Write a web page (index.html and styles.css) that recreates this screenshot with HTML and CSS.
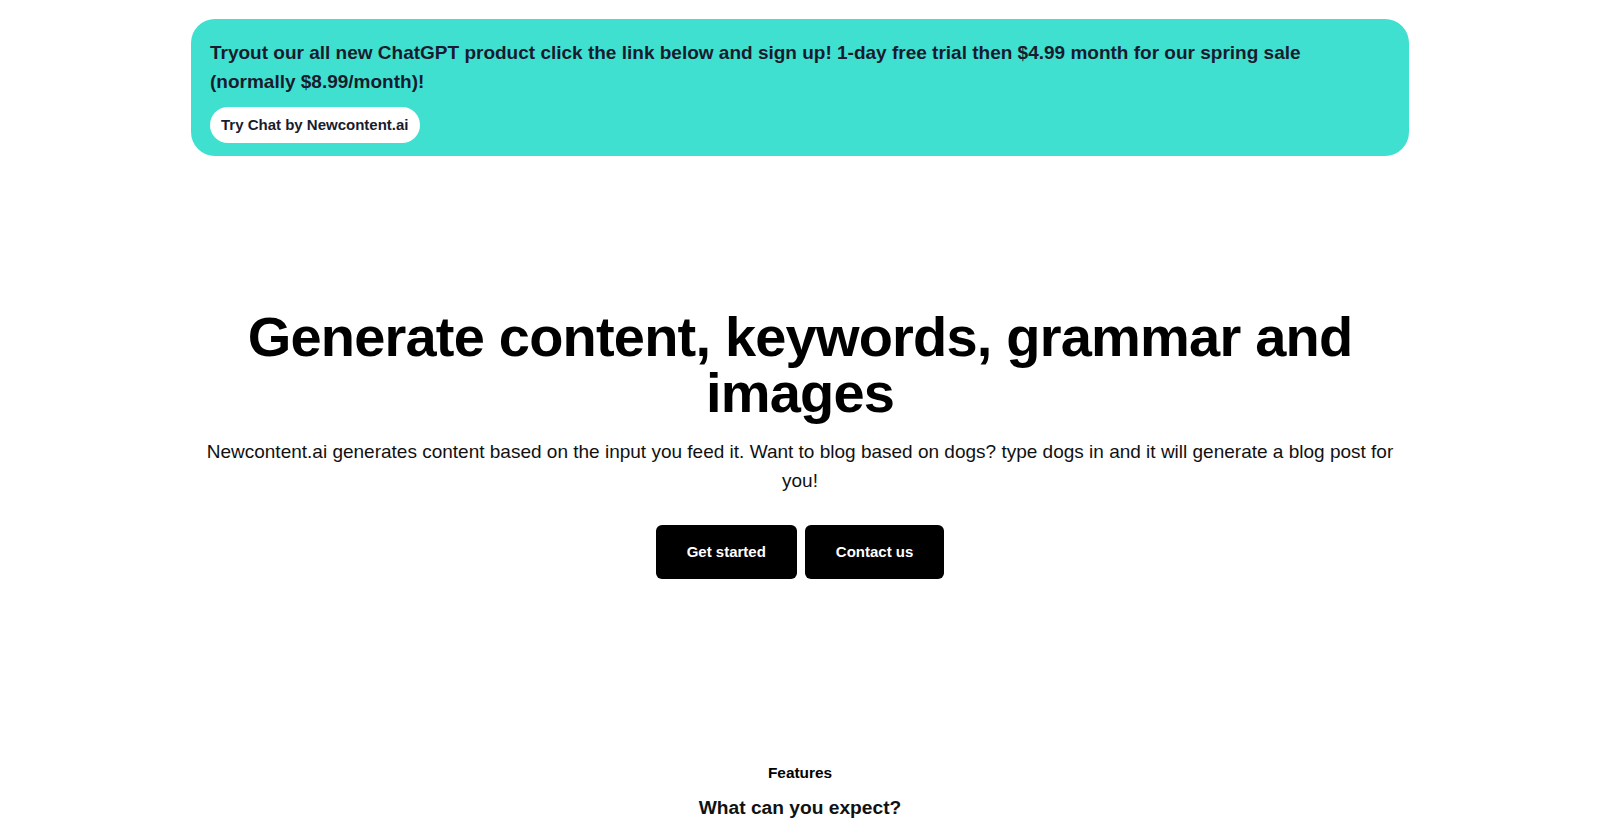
FILE: index.html
```html
<!DOCTYPE html>
<html lang="en">
<head>
<meta charset="utf-8">
<title>Newcontent.ai</title>
<link rel="stylesheet" href="styles.css">
</head>
<body>
<div class="promo">
  <p class="promo-text">Tryout our all new ChatGPT product click the link below and sign up! 1-day free trial then $4.99 month for our spring sale (normally $8.99/month)!</p>
  <a class="promo-link" href="#">Try Chat by Newcontent.ai</a>
</div>
<section class="hero">
  <h1 class="hero-title">Generate content, keywords, grammar and images</h1>
  <p class="hero-sub">Newcontent.ai generates content based on the input you feed it. Want to blog based on dogs? type dogs in and it will generate a blog post for you!</p>
  <div class="hero-actions">
    <a class="btn" href="#">Get started</a>
    <a class="btn" href="#">Contact us</a>
  </div>
</section>
<section class="features">
  <p class="features-label">Features</p>
  <h2 class="features-title">What can you expect?</h2>
</section>
</body>
</html>
```
FILE: styles.css
```css
* { box-sizing: border-box; }
html, body { margin: 0; padding: 0; }
body {
  font-family: "Liberation Sans", Arial, sans-serif;
  color: #000;
  background: #fff;
}
.promo {
  width: 1218px;
  margin: 19px auto 0;
  background: #40e0d0;
  border-radius: 24px;
  padding: 20px 19px 13px;
  color: #191b2e;
}
.promo-text {
  margin: 0;
  font-size: 19px;
  line-height: 28.5px;
  font-weight: 700;
}
.promo-link {
  display: inline-block;
  margin-top: 11px;
  background: #fff;
  color: #191b2e;
  font-size: 15px;
  font-weight: 700;
  line-height: 20px;
  padding: 8px 11px;
  border-radius: 999px;
  text-decoration: none;
}
.hero {
  width: 1218px;
  margin: 0 auto;
  padding-top: 153px;
  display: flex;
  flex-direction: column;
  align-items: center;
  text-align: center;
}
.hero-title {
  margin: 0;
  font-size: 56px;
  line-height: 56px;
  font-weight: 700;
  letter-spacing: -0.8px;
  max-width: 1150px;
}
.hero-sub {
  margin: 17px 0 0;
  font-size: 19px;
  line-height: 28.5px;
  color: #111;
}
.hero-actions {
  margin-top: 30px;
  display: flex;
  gap: 8px;
}
.btn {
  display: inline-block;
  background: #000;
  color: #fff;
  font-size: 15px;
  font-weight: 700;
  line-height: 22px;
  padding: 16px 31px;
  border-radius: 6px;
  text-decoration: none;
}
.features {
  padding-top: 184px;
  text-align: center;
}
.features-label {
  margin: 0;
  font-size: 15.4px;
  line-height: 20px;
  font-weight: 700;
}
.features-title {
  margin: 11px 0 0;
  font-size: 19.2px;
  line-height: 28px;
  font-weight: 700;
  color: #111;
}
```
